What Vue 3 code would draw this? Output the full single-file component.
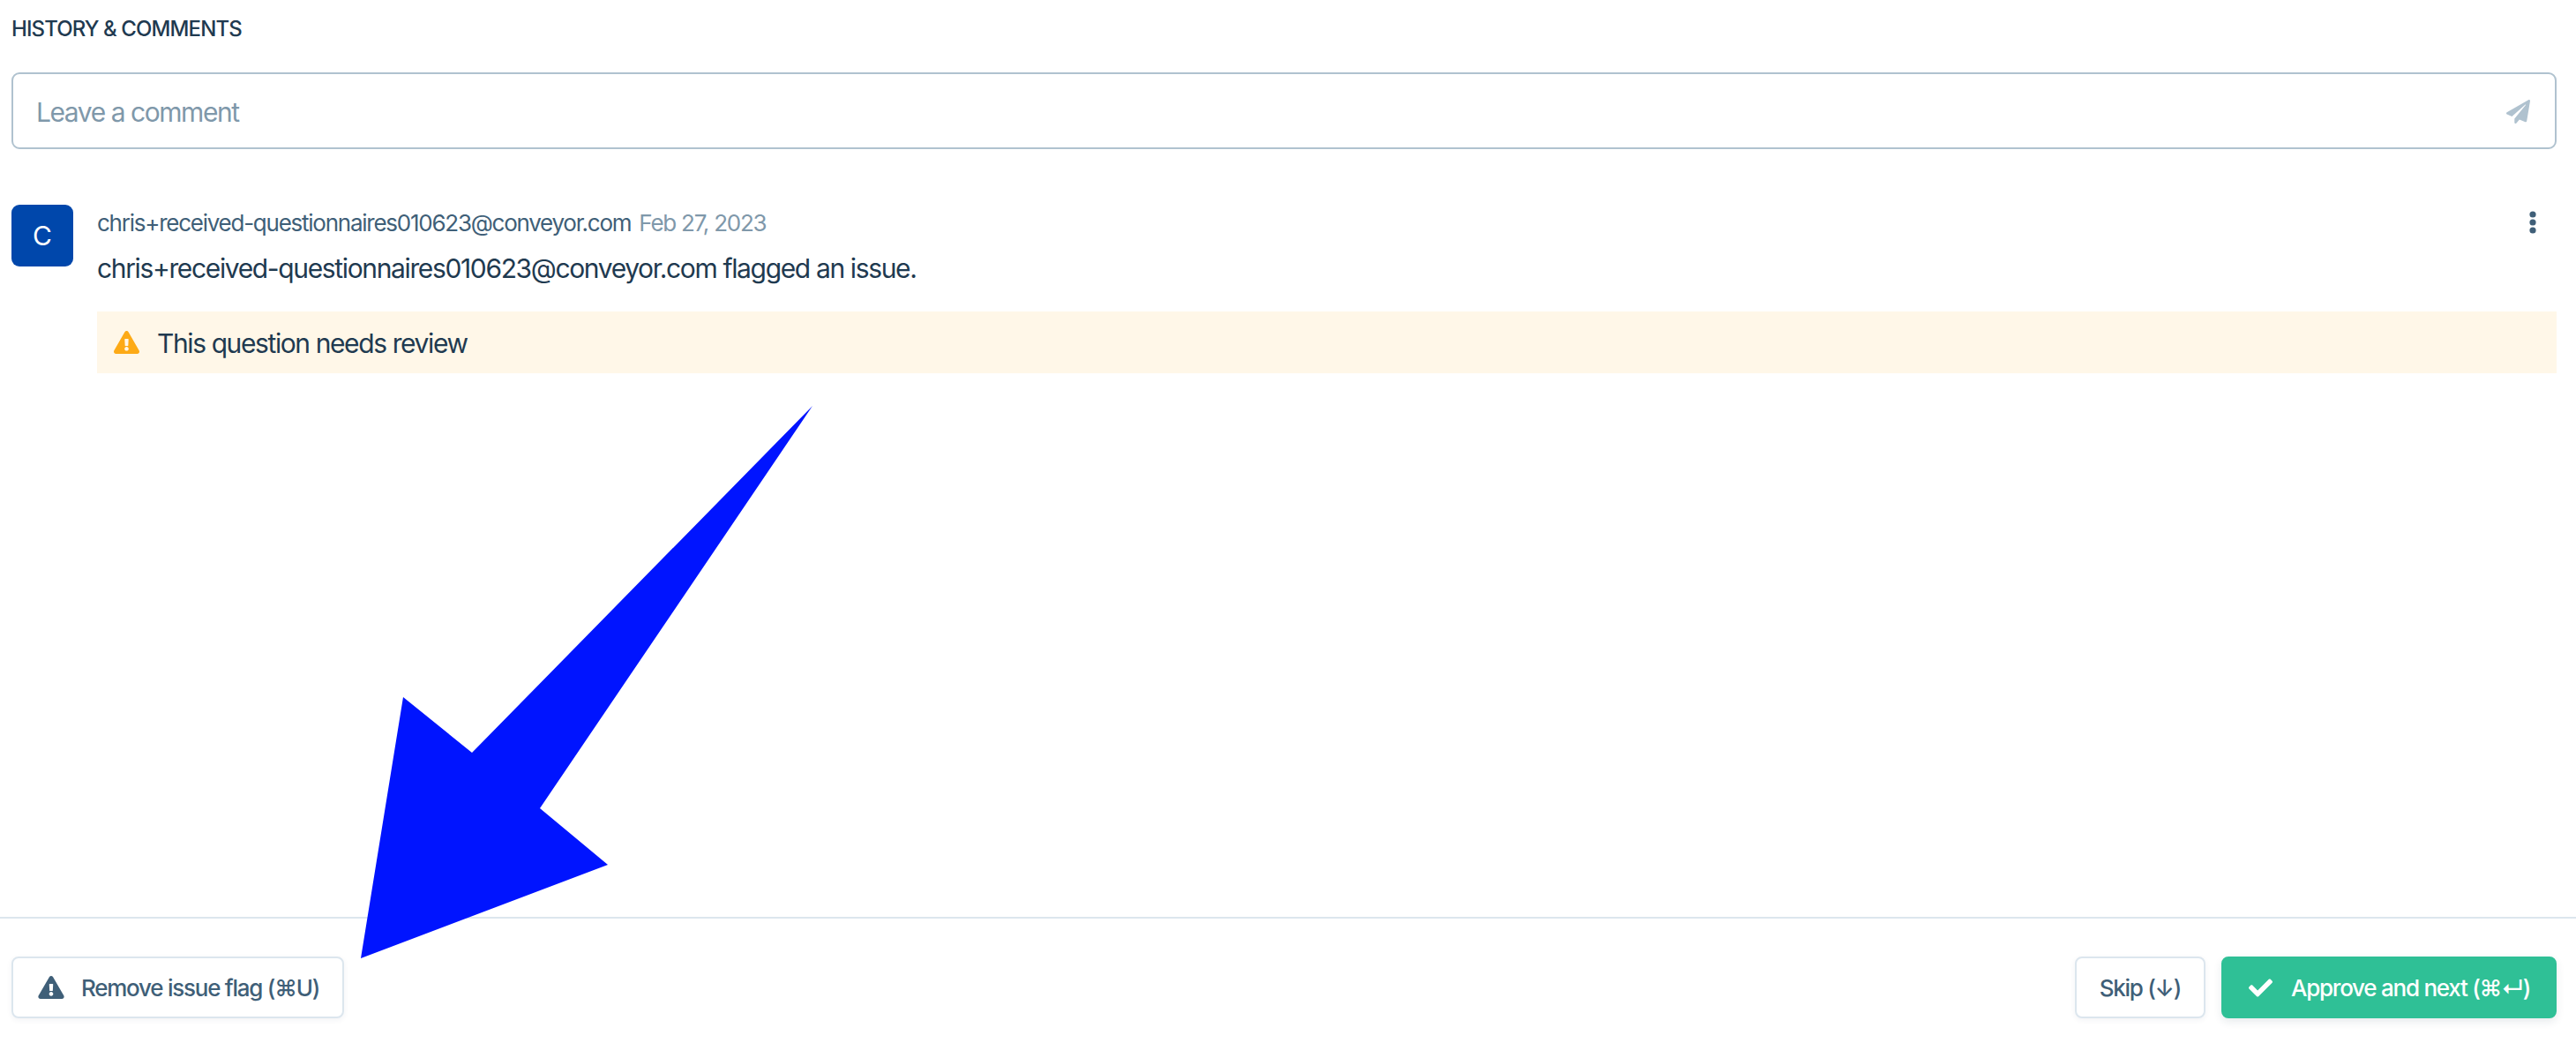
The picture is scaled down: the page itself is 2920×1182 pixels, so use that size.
<script setup>
const email = 'chris+received-questionnaires010623@conveyor.com';
const warning = 'M569.517 440.013C587.975 472.007 564.806 512 527.94 512H48.054c-36.937 0-59.999-40.055-41.577-71.987L246.423 23.985c18.467-32.009 64.72-31.951 83.154 0l239.94 416.028zM288 354c-25.405 0-46 20.595-46 46s20.595 46 46 46 46-20.595 46-46-20.595-46-46-46zm-43.673-165.346l7.418 136c.347 6.364 5.609 11.346 11.982 11.346h48.546c6.373 0 11.635-4.982 11.982-11.346l7.418-136c.375-6.874-5.098-12.654-11.982-12.654h-63.383c-6.884 0-12.356 5.78-11.981 12.654z';
</script>

<template>
  <div class="page">
    <div class="content">
      <h2 class="heading">HISTORY &amp; COMMENTS</h2>

      <div class="comment-box">
        <span class="placeholder">Leave a comment</span>
        <svg class="send" viewBox="0 0 512 512">
          <path fill="#b0c2cf" d="M476 3.2L12.5 270.6c-18.1 10.4-15.8 35.6 2.2 43.2L121 358.4l287.3-253.2c5.5-4.9 13.3 2.6 8.6 8.3L176 407v80.5c0 23.6 28.5 32.9 42.5 15.8L282 426l124.6 52.2c14.2 6 30.4-2.9 33-18.2l72-432C515 7.8 493.3-6.8 476 3.2z" />
        </svg>
      </div>

      <div class="entry">
        <div class="avatar">C</div>
        <div class="entry-body">
          <div class="meta">
            <span class="author">{{ email }}</span>
            <span class="date">Feb 27, 2023</span>
            <svg class="more" viewBox="0 0 8 26">
              <circle cx="4" cy="4" r="3.6" />
              <circle cx="4" cy="13" r="3.6" />
              <circle cx="4" cy="22" r="3.6" />
            </svg>
          </div>
          <p class="action">{{ email }} flagged an issue.</p>
          <div class="flag">
            <svg class="flag-icon" viewBox="0 0 576 512"><path fill="#fdaa16" :d="warning" /></svg>
            <span class="flag-text">This question needs review</span>
          </div>
        </div>
      </div>
    </div>

    <div class="footer">
      <button class="btn">
        <svg class="btn-icon" viewBox="0 0 576 512"><path fill="#3f5f78" :d="warning" /></svg>
        Remove issue flag (⌘U)
      </button>
      <div class="footer-right">
        <button class="btn skip">Skip (↓)</button>
        <button class="btn approve">
          <svg class="check" viewBox="0 0 512 512">
            <path fill="#fff" d="M173.898 439.404l-166.4-166.4c-9.997-9.997-9.997-26.206 0-36.204l36.203-36.204c9.997-9.998 26.207-9.998 36.204 0L192 312.69 432.095 72.596c9.997-9.997 26.207-9.997 36.204 0l36.203 36.204c9.997 9.997 9.997 26.206 0 36.204l-294.4 294.401c-9.998 9.997-26.207 9.997-36.204-.001z" />
          </svg>
          Approve and next (⌘↵)
        </button>
      </div>
    </div>

    <!-- annotation drawn on top of the screenshot -->
    <svg class="arrow" width="2920" height="1182" viewBox="0 0 2920 1182">
      <polygon fill="#0014ff" points="921,460 612,916 689,980 409,1086 457,790 535,853" />
    </svg>
  </div>
</template>

<style scoped>
.page {
  position: relative;
  height: 1182px;
  display: flex;
  flex-direction: column;
  background: #fff;
  font-family: Inter, "DejaVu Sans", sans-serif;
  color: #1f3a50;
  overflow: hidden;
}

.content {
  flex: 1;
  padding: 21px 22px 0 13px;
}

.heading {
  margin: 0;
  font-size: 24px;
  line-height: 24px;
  font-weight: 500;
  letter-spacing: -0.9px;
}

.comment-box {
  margin-top: 37px;
  height: 87px;
  box-sizing: border-box;
  border: 2px solid #b0c2cf;
  border-radius: 9px;
  display: flex;
  align-items: center;
  justify-content: space-between;
  padding: 2px 28px 0 26px;
}

.placeholder {
  font-size: 30px;
  letter-spacing: -1.45px;
  color: #7f98aa;
}

.send { width: 27px; height: 27px; }

.entry {
  margin-top: 63px;
  display: flex;
  gap: 27px;
}

.avatar {
  width: 70px;
  height: 70px;
  flex: none;
  border-radius: 9px;
  background: #0047ab;
  color: #fff;
  font-size: 30px;
  display: flex;
  align-items: center;
  justify-content: center;
}

.entry-body { flex: 1; min-width: 0; }

.meta {
  display: flex;
  align-items: center;
  gap: 9px;
  height: 40px;
  font-size: 26px;
  letter-spacing: -1.25px;
}

.author { color: #3f5f78; }
.date { color: #7f98aa; }

.more {
  margin-left: auto;
  margin-right: 23px;
  width: 8px;
  height: 26px;
  fill: #3f5f78;
}

.action {
  margin: 0;
  padding-top: 14px;
  font-size: 30px;
  line-height: 36px;
  letter-spacing: -1.36px;
}

.flag {
  margin-top: 31px;
  height: 70px;
  background: #fff7e8;
  display: flex;
  align-items: center;
  gap: 20px;
  padding-left: 19px;
  font-size: 30px;
  letter-spacing: -1.4px;
}

.flag-icon { width: 29px; height: 26px; }
.flag-text { padding-top: 2px; }

.footer {
  height: 143px;
  box-sizing: border-box;
  border-top: 2px solid #dce6ee;
  display: flex;
  justify-content: space-between;
  padding: 43px 22px 0 13px;
}

.footer-right { display: flex; gap: 18px; }

.btn {
  height: 70px;
  box-sizing: border-box;
  border: 2px solid #dce6ee;
  border-radius: 8px;
  background: #fff;
  color: #3f5f78;
  font-family: inherit;
  font-size: 26px;
  font-weight: 500;
  letter-spacing: -1.25px;
  white-space: nowrap;
  display: flex;
  align-items: center;
  padding: 0 26px 0 28px;
  box-shadow: 0 2px 6px rgba(31, 58, 80, 0.06);
}

.btn-icon { width: 30px; height: 26px; margin-right: 19px; }

.skip { padding: 0 26px; }

.approve {
  width: 380px;
  border-color: #2fc096;
  background: #2fc096;
  color: #fff;
  padding-left: 29px;
  box-shadow: 0 4px 10px rgba(31, 58, 80, 0.1);
}

.check { width: 27px; height: 27px; margin-right: 21px; }

.arrow {
  position: absolute;
  top: 0;
  left: 0;
  pointer-events: none;
}
</style>
